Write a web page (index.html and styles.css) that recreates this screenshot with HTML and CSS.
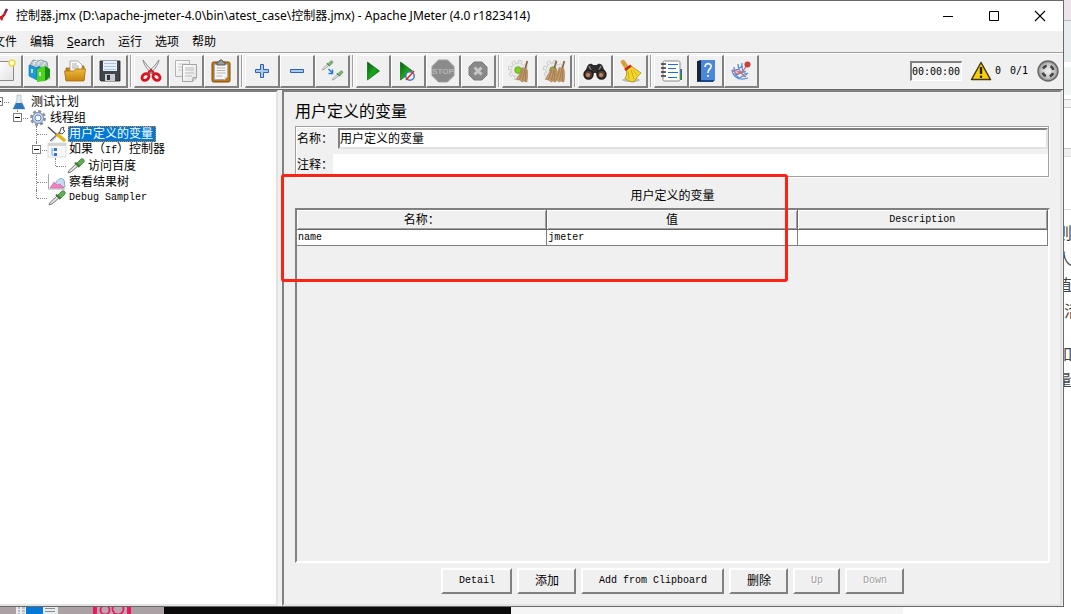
FILE: index.html
```html
<!DOCTYPE html>
<html lang="zh-CN">
<head>
<meta charset="utf-8">
<title>控制器.jmx - Apache JMeter</title>
<link rel="stylesheet" href="styles.css">
</head>
<body>
<svg class="defs" aria-hidden="true">
  <defs>
    <linearGradient id="green" x1="0" y1="0" x2="1" y2="1"><stop offset="0" stop-color="#0a5a10"/><stop offset=".5" stop-color="#18a51c"/><stop offset="1" stop-color="#0c7a10"/></linearGradient>
    <linearGradient id="gold" x1="0" y1="0" x2="0" y2="1"><stop offset="0" stop-color="#f0b93a"/><stop offset="1" stop-color="#c68410"/></linearGradient>
    <linearGradient id="page" x1="0" y1="0" x2="1" y2="1"><stop offset="0" stop-color="#fff"/><stop offset="1" stop-color="#e2e2e2"/></linearGradient>
    <radialGradient id="knob"><stop offset="0" stop-color="#f4f4f4"/><stop offset=".7" stop-color="#c2c2c2"/><stop offset="1" stop-color="#858585"/></radialGradient>
    <symbol id="gear" viewBox="0 0 24 24"><circle cx="11" cy="11" r="9" fill="none" stroke="#bdbdbd" stroke-width="4" stroke-dasharray="4 3.070"/><circle cx="11" cy="11" r="8" fill="#e9e9e9" stroke="#c2c2c2"/><circle cx="11" cy="11" r="9" fill="none" stroke="#ededed" stroke-width="2.600" stroke-dasharray="3 4.070" stroke-dashoffset="-.5"/><circle cx="11" cy="11" r="3.600" fill="#7ed321" stroke="#63a51b"/></symbol>
    <symbol id="broom" viewBox="0 0 14 24"><path d="M12.500 1 10.500 9" stroke="#8a6240" stroke-width="1.800"/><path d="m7 8 5 1c1 5 1 9 0 14l-3-1-2 1-2-2-4-1c3-4 5-8 6-12z" fill="#c39a6b" stroke="#a57d52" stroke-width=".7"/><path d="m8 10-3.500 10M10 10 7.500 21M11 11l-.5 11" stroke="#94693f" stroke-width=".7"/></symbol>
    <symbol id="dropper" viewBox="0 0 20 16"><path d="M2 15 3 12.500 10 6l2 2-7 6z" fill="#dfe3e3" stroke="#777"/><path d="M9 4.500 13.500 9" stroke="#3f7a38" stroke-width="2"/><path d="m11 5 4-4c2-1 4 1 3 3l-4 4z" fill="#5fae52" stroke="#3c7c36" stroke-width=".8"/></symbol>
  </defs>
</svg>

<main class="window">
  <header class="titlebar">
    <svg class="app-icon" width="8" height="16" viewBox="0 0 8 16"><path d="M7 1 4 7 1 10" fill="none" stroke="#c3202c" stroke-width="2.500"/><path d="M7 1 5 4" stroke="#5b2a82" stroke-width="1.500"/><path d="M0 8c2 0 3 1 3 3l-1 2-2-2z" fill="#c8262a"/></svg>
    <h1 class="title">控制器.jmx (D:\apache-jmeter-4.0\bin\atest_case\控制器.jmx) - Apache JMeter (4.0 r1823414)</h1>
    <button class="caption" aria-label="Minimize"><svg width="12" height="12" viewBox="0 0 12 12"><path d="M1 6.500h10" stroke="#000"/></svg></button>
    <button class="caption" aria-label="Maximize"><svg width="12" height="12" viewBox="0 0 12 12"><path d="M1.500 1.500h9v9h-9z" fill="none" stroke="#000"/></svg></button>
    <button class="caption" aria-label="Close"><svg width="12" height="12" viewBox="0 0 12 12"><path d="m1 1 10 10M11 1 1 11" stroke="#000" stroke-width="1.100"/></svg></button>
  </header>

  <nav class="menubar">
    <button class="menu">文件</button>
    <button class="menu">编辑</button>
    <button class="menu"><u>S</u>earch</button>
    <button class="menu">运行</button>
    <button class="menu">选项</button>
    <button class="menu">帮助</button>
  </nav>

  <div class="toolbar">
    <div class="tools">
      <div class="group">
        <button class="tool" aria-label="新建"><svg viewBox="0 0 24 24"><path d="M4.500 2.500h16v19h-16z" fill="url(#page)" stroke="#8a8a8a"/><circle cx="19" cy="4" r="3" fill="#fffbd0" stroke="#ecd94c" stroke-width="1.600"/></svg></button>
        <button class="tool" aria-label="模板"><svg viewBox="0 0 24 24"><path d="M2 6 5 1l5 1 3-1 6 2 1 5-8 4z" fill="#b9c7cc" stroke="#73878c" stroke-width=".7"/><path d="M6 6V3l3-1M10 6l1-3 3-1M15 7l2-4" fill="none" stroke="#eef6f7"/><path d="M1 6l8 3v12l-8-4z" fill="#1c9ae0" stroke="#0a6cab" stroke-width=".6"/><path d="m8 9 3-2 3 2v10l-5 2z" fill="#0c83c5"/><path d="m9 10 8-3v15l-8 1z" fill="#4fd321"/><path d="m17 7 5 3v9l-5 3z" fill="#178b12"/><path d="M4 10v4M12 13v4" stroke="#e7f8ff" stroke-width="1.500"/><path d="m19 21 4-2-2-1z" fill="#aaa"/></svg></button>
        <button class="tool" aria-label="打开"><svg viewBox="0 0 24 24"><path d="M3 21V9h4l2-2h12v14z" fill="#c58a1b" stroke="#99680b" stroke-width=".8"/><path d="M7 2h8l4 4v8H7z" fill="#fff" stroke="#999" stroke-width=".8"/><path d="M9 5h5M9 7h7M9 9h7" stroke="#aaa"/><path d="M1.500 12h9l2-2h10l-1.500 12H3z" fill="url(#gold)" stroke="#a6700e" stroke-width=".8"/></svg></button>
        <button class="tool" aria-label="保存"><svg viewBox="0 0 24 24"><path d="M2 2h20v20H3l-1-1z" fill="#41454c" stroke="#222" stroke-width=".8"/><path d="M5 2h14v10H5z" fill="#e8f1fb"/><path d="M6 4.500h12M6 7.500h12M6 10.500h12" stroke="#a9c6ea"/><path d="M7 15h10v7H7z" fill="#c8cbd0"/><path d="M9 16h3v5H9z" fill="#30343a"/></svg></button>
      </div>
      <i class="sep"></i>
      <div class="group">
        <button class="tool" aria-label="剪切"><svg viewBox="0 0 24 24"><path d="M4 1c1 5 4 9 9 14l2-2C10 9 7 5 4 1zM20 1c-1 5-4 9-9 14l-2-2c5-4 8-8 11-12z" fill="#ececec" stroke="#777" stroke-width=".8"/><path d="m9 14 3-3 3 3" fill="none" stroke="#d21820" stroke-width="2"/><ellipse cx="6.500" cy="18" rx="3.800" ry="3" fill="none" stroke="#d9141e" stroke-width="2.800" transform="rotate(-38 6.500 18)"/><ellipse cx="17.500" cy="18" rx="3.800" ry="3" fill="none" stroke="#d9141e" stroke-width="2.800" transform="rotate(38 17.500 18)"/></svg></button>
        <button class="tool" aria-label="复制"><svg viewBox="0 0 24 24"><path d="M1.500 1.500h14v16h-14z" fill="url(#page)" stroke="#b4b4b4"/><path d="M4 5h9M4 8h7M4 11h4" stroke="#c8c8c8"/><path d="M8.500 5.500h14V19l-4 3.500h-10z" fill="url(#page)" stroke="#a3a3a3"/><path d="M11 9h9M11 11h9M11 14h9M11 17h7" stroke="#bbb"/><path d="m18.500 22.500.5-4 3.500.5" fill="#ddd" stroke="#999"/></svg></button>
        <button class="tool" aria-label="粘贴"><svg viewBox="0 0 24 24"><rect x="3" y="3" width="18" height="20" rx="1.500" fill="#ba7d25" stroke="#7d4d0b"/><path d="M5.500 5.500h13v12l-3 3h-10z" fill="#f6f6f4" stroke="#aaa"/><path d="M7.500 9h9M7.500 11.500h9M7.500 14h9M7.500 17h6" stroke="#b6b6b6"/><path d="m15 21 .5-3.500 3 .5z" fill="#ddd"/><path d="M8 6V3h2l1-2h2l1 2h2v3z" fill="#999d99" stroke="#565a56"/></svg></button>
      </div>
      <i class="sep"></i>
      <div class="group">
        <button class="tool" aria-label="展开"><svg viewBox="0 0 24 24"><path d="M10.500 5.500h3v5h5v3h-5v5h-3v-5h-5v-3h5z" fill="#a9c9f0" stroke="#2f63ad"/></svg></button>
        <button class="tool" aria-label="折叠"><svg viewBox="0 0 24 24"><path d="M5.500 10.500h13v3h-13z" fill="#a9c9f0" stroke="#2f63ad"/></svg></button>
        <button class="tool" aria-label="切换"><svg viewBox="0 0 24 24"><use href="#dropper" x="1" y="1" width="13" height="11" opacity=".85"/><use href="#dropper" x="11" y="11" width="13" height="11" opacity=".85"/><path d="m8.500 10 4 4M12.500 10.500v4h-4" fill="none" stroke="#2c79d9" stroke-width="1.500"/></svg></button>
      </div>
      <i class="sep"></i>
      <div class="group">
        <button class="tool" aria-label="启动"><svg viewBox="0 0 24 24"><path d="m6.500 3 12 9-12 9z" fill="url(#green)" stroke="#0c6410" stroke-width=".7"/></svg></button>
        <button class="tool" aria-label="不停顿开始"><svg viewBox="0 0 24 24"><path d="m4.500 3 12 9-12 9z" fill="url(#green)" stroke="#0c6410" stroke-width=".7"/><circle cx="14" cy="17" r="4.200" fill="#edf3fb" stroke="#4b77b8" stroke-width="1.500"/><path d="m10 21 8-9" stroke="#d92525" stroke-width="1.400"/></svg></button>
        <button class="tool" aria-label="停止" disabled><svg viewBox="0 0 24 24"><path d="M7.500 1h9L23 7.500v9L16.500 23h-9L1 16.500v-9z" fill="#8b8b8b" stroke="#9f9f9f"/><text x="12" y="15" class="stop-text" text-anchor="middle">STOP</text></svg></button>
        <button class="tool" aria-label="关闭" disabled><svg viewBox="0 0 24 24"><path d="M8 3h8l5 5v8l-5 5H8l-5-5V8z" fill="#898989" stroke="#7c7c7c"/><path d="m8.500 8.500 7 7m0-7-7 7" stroke="#c7c7c7" stroke-width="3"/></svg></button>
      </div>
      <i class="sep"></i>
      <div class="group">
        <button class="tool" aria-label="清除"><svg viewBox="0 0 24 24"><use href="#gear" x="1" y="1" width="22" height="22"/><use href="#broom" x="8" y="1" width="14" height="23"/></svg></button>
        <button class="tool" aria-label="清除全部"><svg viewBox="0 0 24 24"><use href="#gear" x="1" y="1" width="22" height="22"/><use href="#broom" x="2" y="1" width="14" height="23"/><use href="#broom" x="10" y="1" width="14" height="23"/></svg></button>
      </div>
      <i class="sep"></i>
      <div class="group">
        <button class="tool" aria-label="查找"><svg viewBox="0 0 24 24"><path d="M4 8c1-4 5-4 6-2h4c1-2 5-2 6 2l3 7-7 3-3-4h-2l-3 4-7-3z" fill="#2d2d2d"/><path d="M6 7l2 4M18 7l-2 4" stroke="#858585" stroke-width="1.400"/><circle cx="5.500" cy="15.500" r="4.300" fill="#5b4134" stroke="#1e1e1e" stroke-width="1.800"/><circle cx="18.500" cy="15.500" r="4.300" fill="#5b4134" stroke="#1e1e1e" stroke-width="1.800"/><circle cx="5" cy="16" r="2" fill="#c18567"/><circle cx="18" cy="16" r="2" fill="#c18567"/></svg></button>
        <button class="tool" aria-label="重置查找"><svg viewBox="0 0 24 24"><ellipse cx="13" cy="21" rx="9" ry="2" fill="#bbb"/><path d="m5 3 4 6" stroke="#d9a13c" stroke-width="4.500" stroke-linecap="round"/><path d="M8 10 13 7c3 2 6 4 10 7-2 2-5 5-7 9-3 0-6-1-9-4 2-2 2-5 1-9z" fill="#f2d62c" stroke="#a78a12" stroke-width=".8"/><path d="m10 12 1 8M13 11l3 9M15 11l4 5" stroke="#c2a21b" stroke-width=".8"/><path d="m7 11 6-4.500" stroke="#cf1e1c" stroke-width="2.600"/></svg></button>
      </div>
      <i class="sep"></i>
      <div class="group">
        <button class="tool" aria-label="函数助手"><svg viewBox="0 0 24 24"><path d="M20 10h3v5h-3z" fill="#1e63c9"/><path d="M20 15h3v6h-3z" fill="#168d1b"/><rect x="4" y="2" width="17" height="20" rx="1.500" fill="#fff" stroke="#888"/><path d="M2 5h5M2 9h5M2 13h5M2 17h5" stroke="#333" stroke-width="1.600"/><path d="M9 5.500h10M9 9.500h8M9 13.500h10M9 18.500h9" stroke="#1a6fe0"/></svg></button>
        <button class="tool" aria-label="帮助"><svg viewBox="0 0 24 24"><path d="M3 2.500 6 1h15v20l-2 2H3z" fill="#184a8a"/><path d="M7 1h14v20H7z" fill="#4a88dc"/><path d="M3 2h4v20H3z" fill="#172436"/><path d="M11 8c0-5 7-4 6 0-1 3-3 2-3 6m0 2v2" fill="none" stroke="#fff" stroke-width="1.600"/></svg></button>
        <button class="tool" aria-label="R"><svg viewBox="0 0 24 24"><path d="M3 11c1 7 7 11 16 8M5 8c0 5 2 9 6 12M9 5c0 5 2 9 8 13M13 4c-1 5 1 9 5 12M3 13l11-6M5 17l12-5M9 20l10-6" fill="none" stroke="#5b8bd8" stroke-width="1.300"/><path d="M3 11c5 0 9 2 13 7M17 7c-1 4-5 7-12 8" fill="none" stroke="#d76a70" stroke-width="1.200"/><circle cx="18.500" cy="5.500" r="3" fill="#cd3d37"/></svg></button>
      </div>
    </div>
    <div class="status">
      <input class="timer" aria-label="运行时间" value="00:00:00" readonly>
      <svg class="warn" width="22" height="20" viewBox="0 0 22 20"><path d="M11 1.500 20.500 18.500h-19z" fill="#f8ce0b" stroke="#42380c" stroke-width="1.500" stroke-linejoin="round"/><path d="M11 6v7" stroke="#222" stroke-width="2.400"/><circle cx="11" cy="15.700" r="1.300" fill="#222"/></svg>
      <span>0</span>
      <span class="threads">0/1</span>
      <svg width="22" height="22" viewBox="0 0 22 22"><circle cx="11" cy="11" r="10" fill="url(#knob)" stroke="#666" stroke-width="1.400"/><circle cx="11" cy="11" r="5.500" fill="none" stroke="#444" stroke-width="2.600" stroke-dasharray="4.600 4.040" stroke-dashoffset="-2"/></svg>
    </div>
  </div>

  <div class="split">
    <aside class="tree-pane">
      <ul class="tree">
        <li>
          <div class="node"><i class="toggle"></i><svg class="ico" viewBox="0 0 20 16"><path d="M8 1h4v5l4 9H4l4-9z" fill="#dfe9ef" stroke="#a8b3ba" stroke-width=".7"/><path d="m7 9-3 6h12l-3-6z" fill="#2c76bd"/></svg><span class="label">测试计划</span></div>
          <ul>
            <li>
              <div class="node"><i class="toggle"></i><svg class="ico" viewBox="0 0 20 16"><circle cx="10" cy="8" r="6.700" fill="none" stroke="#8490a5" stroke-width="2.500" stroke-dasharray="3 2.260"/><circle cx="10" cy="8" r="5.500" fill="#cbd5e5" stroke="#7d8ba3"/><circle cx="10" cy="8" r="3" fill="#f5f8fc" stroke="#5a87c8"/></svg><span class="label">线程组</span></div>
              <ul>
                <li><div class="node"><svg class="ico" viewBox="0 0 20 16"><path d="m4 15 9-9" stroke="#c7c7c7" stroke-width="2.500"/><path d="M3 15 13 6l1-4 3-1-1 3 2 1-3 3-3-1" fill="none" stroke="#555"/><path d="m1 1 9 8" stroke="#555" stroke-width="1.600"/><path d="m11 9 6 5" stroke="#e2b512" stroke-width="3.500" stroke-linecap="round"/></svg><span class="label selected">用户定义的变量</span></div></li>
                <li>
                  <div class="node"><i class="toggle"></i><svg class="ico" viewBox="0 0 20 16"><path d="M1 1h18v14H1z" fill="#f7f7f7" stroke="#ddd"/><path d="M1 1h18v3H1z" fill="#d4d4d4"/><path d="M5 6v7h3M5 8h3" fill="none" stroke="#79a9dc"/><path d="M7 6h3v3H7zM7 11h3v3H7z" fill="#3478c7"/></svg><span class="label">如果（<span class="mono">If</span>）控制器</span></div>
                  <ul>
                    <li><div class="node"><svg class="ico" viewBox="0 0 20 16"><use href="#dropper"/></svg><span class="label">访问百度</span></div></li>
                  </ul>
                </li>
                <li><div class="node"><svg class="ico" viewBox="0 0 20 16"><path d="M1.500 0v15H18" fill="none" stroke="#aaa"/><path d="M8 13c1-9 7-10 9-7l1 7z" fill="#c7dcf3" stroke="#8aaad3"/><path d="m3 14 4-6 3 3 3-1 4 4z" fill="#f182c1" stroke="#c963a0" stroke-width=".6"/></svg><span class="label">察看结果树</span></div></li>
                <li><div class="node"><svg class="ico" viewBox="0 0 20 16"><use href="#dropper"/></svg><span class="label mono">Debug Sampler</span></div></li>
              </ul>
            </li>
          </ul>
        </li>
      </ul>
    </aside>

    <section class="editor">
      <h2 class="heading">用户定义的变量</h2>
      <div class="form">
        <div class="field"><label for="name">名称：</label><input id="name" class="name-input" value="用户定义的变量"></div>
        <div class="field comment"><label for="comment">注释：</label><input id="comment" class="comment-input"></div>
      </div>
      <h3 class="caption-text">用户定义的变量</h3>
      <div class="table-pane">
        <table class="vars">
          <thead><tr><th>名称：</th><th>值</th><th class="mono">Description</th></tr></thead>
          <tbody><tr><td>name</td><td>jmeter</td><td></td></tr></tbody>
        </table>
      </div>
      <div class="actions">
        <button class="btn mono">Detail</button>
        <button class="btn">添加</button>
        <button class="btn mono">Add from Clipboard</button>
        <button class="btn">删除</button>
        <button class="btn mono" disabled>Up</button>
        <button class="btn mono" disabled>Down</button>
      </div>
    </section>
  </div>
  <div class="highlight"></div>
</main>

<aside class="behind-right">
  <div class="bars"></div>
  <span>则</span><span>人</span><span>值</span><span class="inset">活</span><span class="gap">如</span><span>量</span>
</aside>
<footer class="behind-bottom">
  <div class="thumb"><svg width="164" height="8" viewBox="0 0 164 8"><path d="M0 0h164v8H0z" fill="#aaa1a5"/><path d="M16 0h42v8H16z" fill="#e8ecee"/><path d="M26 0h17v8H26z" fill="#0878d6"/><path d="M18 1h2m2 0h3M18 4h2m2 0h3M18 7h2m2 0h3M45 1.500h10M45 4.500h10M45 7.500h10" stroke="#8a8f92"/><path d="M93 0h37v8H93z" fill="#b9a7b0"/><path d="M93 0h4v8h-4zM127 0h4v8h-4z" fill="#ec1763"/><circle cx="105" cy="3" r="4.500" fill="none" stroke="#ec1763" stroke-width="1.800"/><circle cx="118" cy="2" r="5.500" fill="none" stroke="#ec1763" stroke-width="1.800"/></svg></div>
  <div class="black"></div>
  <div class="pale"></div>
</footer>
</body>
</html>
```

FILE: styles.css
```css
* { box-sizing: border-box; }

body {
  margin: 0;
  height: 100vh;
  display: grid;
  grid-template: minmax(0, 1fr) 7px / minmax(0, 1fr) 7px;
  overflow: hidden;
  background: #fff;
  color: #000;
  font: 12px/16px "Liberation Sans", "Noto Sans CJK SC", sans-serif;
}

h1, h2, h3, ul { margin: 0; padding: 0; font-weight: normal; }
ul { list-style: none; }
button, input { font: inherit; color: inherit; margin: 0; }
button { padding: 0; border: 0; background: none; }
.defs { position: absolute; width: 0; height: 0; }
.mono { font-family: "Liberation Mono", "Noto Sans CJK SC", monospace; font-size: 10px; }

.window {
  position: relative;
  display: flex;
  flex-direction: column;
  min-height: 0;
  background: #f0f0f0;
  border: solid #696969;
  border-width: 1px 1px 1px 0;
}

/* Title bar and menus */
.titlebar { display: flex; align-items: center; height: 30px; background: #fff; }
.app-icon { margin-right: 8px; }
.title { flex: 1; font: 12px/20px "Noto Sans", "Noto Sans CJK SC", sans-serif; white-space: nowrap; }
.caption { display: grid; place-items: center; width: 46px; height: 30px; }

.menubar {
  display: flex;
  gap: 13px;
  height: 22px;
  margin-left: -7px;
  border-bottom: 1px solid #a0a0a0;
  font: 12px/20px "Noto Sans", "Noto Sans CJK SC", sans-serif;
}

/* Toolbar */
.toolbar {
  display: flex;
  justify-content: space-between;
  height: 37px;
  padding-top: 1px;
  border-top: 1px solid #fff;
  border-bottom: 1px solid #696969;
}
.tools { display: flex; margin-left: -12px; }
.group { display: flex; }
.tool {
  display: grid;
  place-items: center;
  width: 35px;
  height: 33px;
  border: solid;
  border-width: 1px 2px 2px 1px;
  border-color: #fff #808080 #808080 #fff;
}
.tool svg { width: 24px; height: 24px; }
.stop-text { font: bold 8px "Liberation Sans", sans-serif; fill: #b5b5b5; }
.sep { width: 2px; height: 32px; margin: 0 2px; border-left: 1px solid #a0a0a0; border-right: 1px solid #fff; }
.status {
  display: flex;
  align-items: center;
  padding-right: 4px;
  padding-bottom: 2px;
  font: 10px/16px "DejaVu Sans Mono", monospace;
}
.timer {
  width: 52px;
  height: 20px;
  padding: 0;
  border: solid;
  border-width: 2px 1px 1px 2px;
  border-color: #808080 #fff #fff #808080;
  background: #f4f4f4;
}
.warn { margin: 0 3px 0 8px; }
.threads { margin: 0 9px; }

/* Split area */
.split { flex: 1; min-height: 0; display: flex; gap: 4px; padding-right: 1px; }
.tree-pane {
  width: 278px;
  border: solid;
  border-width: 2px 2px 2px 0;
  border-color: #808080 #e3e3e3 #e3e3e3;
  background: #fff;
  overflow: hidden;
}
.tree { padding: 2px 0 0 9px; }
.tree ul { padding-left: 19px; }
.tree li { position: relative; }
.tree li::before {
  content: "";
  position: absolute;
  left: -11px;
  top: 0;
  bottom: 0;
  border-left: 1px dotted #808080;
}
.tree li:last-child::before { bottom: auto; height: 8px; }
.node { position: relative; display: flex; align-items: center; height: 16px; }
.node::before {
  content: "";
  position: absolute;
  left: -10px;
  top: 8px;
  width: 10px;
  border-top: 1px dotted #808080;
}
.toggle {
  position: absolute;
  left: -15px;
  top: 3px;
  width: 9px;
  height: 9px;
  border: 1px solid #808080;
  background: linear-gradient(#000, #000) center / 5px 1px no-repeat #fff;
}
.ico { width: 20px; height: 16px; margin-right: 1px; }
.label { padding: 0 1px; white-space: nowrap; }
.selected { color: #fff; background: #0078d7; outline: 1px dotted #f08020; outline-offset: -1px; padding-right: 3px; }

.editor {
  flex: 1;
  min-width: 0;
  display: flex;
  flex-direction: column;
  padding: 8px 10px 10px 11px;
  border: 2px solid;
  border-color: #808080 #e3e3e3 #e3e3e3 #808080;
}
.heading { font-size: 16px; line-height: 24px; }
.form {
  display: flex;
  flex-direction: column;
  gap: 5px;
  margin-top: 2px;
  border: 1px solid #a0a0a0;
  box-shadow: inset 1px 1px #fff, 1px 1px #fff;
  padding: 1px 0 0 1px;
  margin-right: 1px;
}
.field { display: flex; align-items: center; gap: 5px; }
.field label { width: 36px; white-space: nowrap; }
.field input { flex: 1; min-width: 0; height: 22px; padding: 0 1px; background: #fff; }
.field .name-input { height: 21px; padding: 0 0 2px; border: 2px solid; border-color: #808080 #e3e3e3 #e3e3e3 #808080; }
.field.comment { gap: 0; }
.field .comment-input { border: 0; }
.caption-text { margin: 10px 0 3px; font-size: 12px; line-height: 18px; text-align: center; }
.table-pane {
  flex: 1;
  min-height: 0;
  border: 2px solid;
  border-color: #808080 #fff #fff #808080;
}
.vars { width: 100%; table-layout: fixed; border-collapse: separate; border-spacing: 0; }
.vars th {
  height: 20px;
  padding: 0;
  font-weight: normal;
  line-height: 16px;
  border: solid #696969;
  border-width: 0 1px 1px 0;
  box-shadow: inset 1px 1px #fff, inset -1px -1px #a0a0a0;
}
.vars td {
  height: 16px;
  padding: 0 1px;
  background: #fff;
  border: solid #808080;
  border-width: 0 1px 1px 0;
  font: 10px/15px "Liberation Mono", monospace;
}
.actions { display: flex; justify-content: center; gap: 5px; padding-top: 5px; }
.btn {
  height: 26px;
  padding: 0 15px 0 16px;
  border: 2px solid;
  border-color: #fff #808080 #808080 #fff;
  white-space: nowrap;
}
.btn:disabled { color: #a0a0a0; text-shadow: 1px 1px #fff; }

/* Annotation frame over the editor */
.highlight {
  position: absolute;
  left: 281px;
  top: 173px;
  width: 507px;
  height: 108px;
  border: 3px solid #fb2313;
  border-radius: 3px;
}

/* Content visible behind the window */
.behind-right {
  display: flex;
  flex-direction: column;
  min-height: 0;
  overflow: hidden;
  color: #444;
  font: 16px/26px "Noto Sans CJK SC", sans-serif;
}
.behind-right span { width: 16px; margin-left: -8px; }
.behind-right .inset { margin-left: 0; }
.behind-right .gap { margin-top: 17px; }
.bars {
  height: 219px;
  flex: none;
  background: linear-gradient(#ece4ea 20px, #bbb 20px 21px, #e7edef 21px 62px, #fff 62px 67px, #f0f4f5 67px 95px, #fff 95px 99px, #ccc 99px 100px, #f4f4f4 100px 107px, #ccc 107px 108px, #fff 108px 148px, #ccc 148px 149px, #f0f0f0 149px 156px, #ddd 156px 157px, #fff 157px 209px, #ddd 209px 210px, #fff 210px);
}
.behind-bottom { grid-column: 1 / -1; display: flex; }
.thumb { width: 164px; overflow: hidden; }
.thumb svg { display: block; }
.black { width: 347px; background: #0a0a0a; }
.pale { width: 392px; background: #f5f5f5; }
```
